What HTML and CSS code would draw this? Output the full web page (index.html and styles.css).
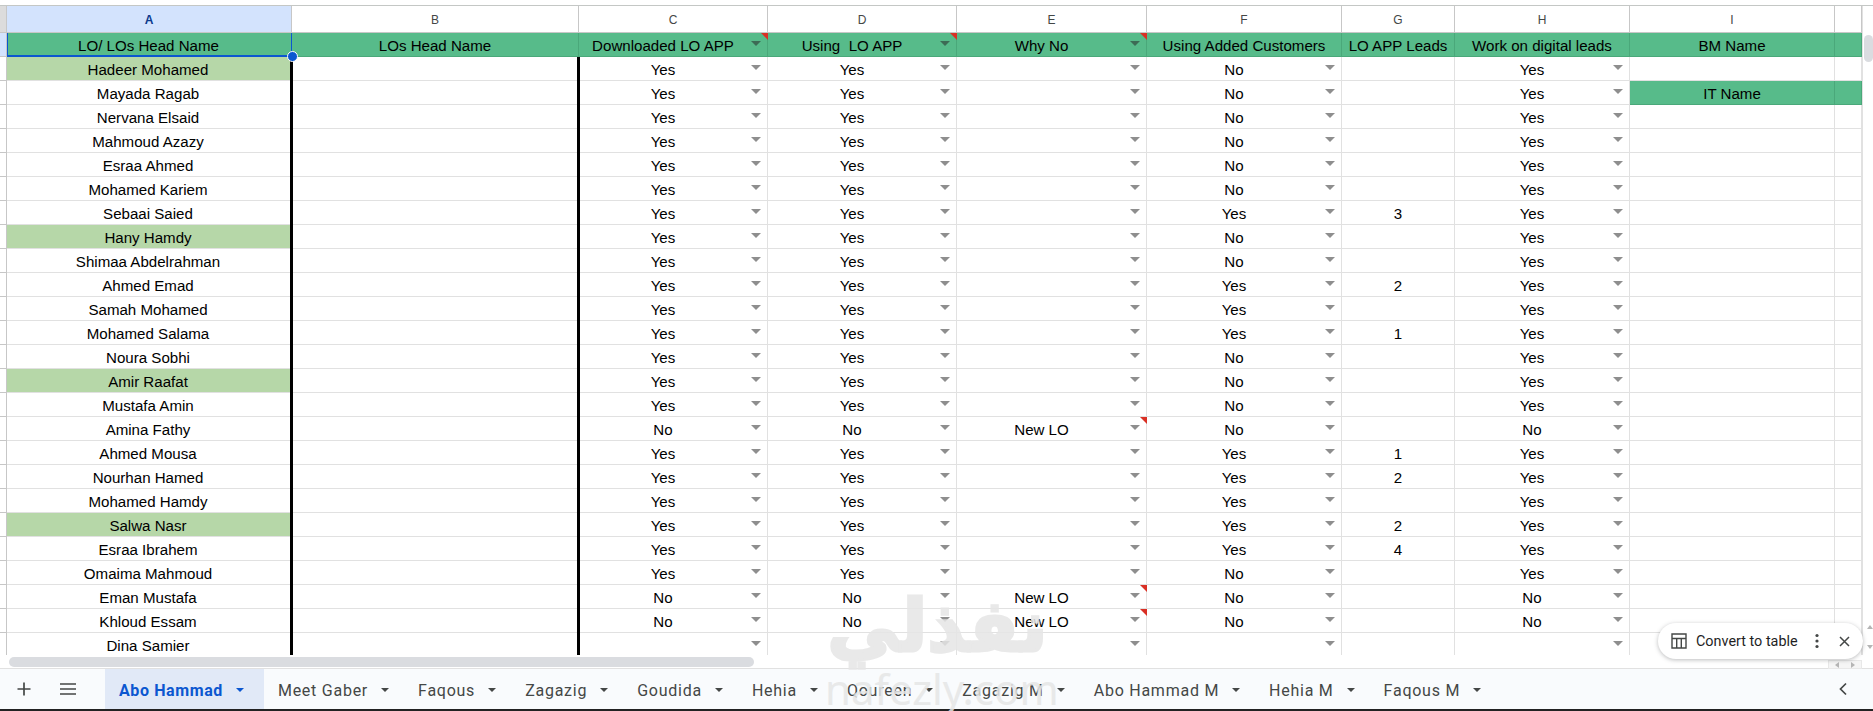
FILE: index.html
```html
<!DOCTYPE html>
<html lang="en">
<head>
<meta charset="utf-8">
<title>Abo Hammad</title>
<link rel="stylesheet" href="styles.css">
</head>
<body>
<div class="app">
  <div class="topgap"></div>
  <div class="main">
    <div class="sheet">
      <div class="row colhead"><div class="gut gut-sel"></div><div class="c a sel">A</div><div class="c b">B</div><div class="c cc">C</div><div class="c d">D</div><div class="c e">E</div><div class="c f">F</div><div class="c g">G</div><div class="c h">H</div><div class="c i">I</div><div class="c j"></div></div>
      <div class="row head"><div class="gut gut-sel"></div><div class="c a selcell">LO/ LOs Head Name</div><div class="c b">LOs Head Name</div><div class="c cc dd note">Downloaded LO APP</div><div class="c d dd note">Using &nbsp;LO APP</div><div class="c e dd note">Why No</div><div class="c f">Using Added Customers</div><div class="c g">LO APP Leads</div><div class="c h">Work on digital leads</div><div class="c i">BM Name</div><div class="c j"></div></div>
      <div class="row"><div class="gut"></div><div class="c a lead tb">Hadeer Mohamed</div><div class="c b tb"></div><div class="c cc dd">Yes</div><div class="c d dd">Yes</div><div class="c e dd"></div><div class="c f dd">No</div><div class="c g"></div><div class="c h dd">Yes</div><div class="c i"></div><div class="c j"></div></div>
      <div class="row"><div class="gut"></div><div class="c a tb">Mayada Ragab</div><div class="c b tb"></div><div class="c cc dd">Yes</div><div class="c d dd">Yes</div><div class="c e dd"></div><div class="c f dd">No</div><div class="c g"></div><div class="c h dd">Yes</div><div class="c i it">IT Name</div><div class="c j it"></div></div>
      <div class="row"><div class="gut"></div><div class="c a tb">Nervana Elsaid</div><div class="c b tb"></div><div class="c cc dd">Yes</div><div class="c d dd">Yes</div><div class="c e dd"></div><div class="c f dd">No</div><div class="c g"></div><div class="c h dd">Yes</div><div class="c i"></div><div class="c j"></div></div>
      <div class="row"><div class="gut"></div><div class="c a tb">Mahmoud Azazy</div><div class="c b tb"></div><div class="c cc dd">Yes</div><div class="c d dd">Yes</div><div class="c e dd"></div><div class="c f dd">No</div><div class="c g"></div><div class="c h dd">Yes</div><div class="c i"></div><div class="c j"></div></div>
      <div class="row"><div class="gut"></div><div class="c a tb">Esraa Ahmed</div><div class="c b tb"></div><div class="c cc dd">Yes</div><div class="c d dd">Yes</div><div class="c e dd"></div><div class="c f dd">No</div><div class="c g"></div><div class="c h dd">Yes</div><div class="c i"></div><div class="c j"></div></div>
      <div class="row"><div class="gut"></div><div class="c a tb">Mohamed Kariem</div><div class="c b tb"></div><div class="c cc dd">Yes</div><div class="c d dd">Yes</div><div class="c e dd"></div><div class="c f dd">No</div><div class="c g"></div><div class="c h dd">Yes</div><div class="c i"></div><div class="c j"></div></div>
      <div class="row"><div class="gut"></div><div class="c a tb">Sebaai Saied</div><div class="c b tb"></div><div class="c cc dd">Yes</div><div class="c d dd">Yes</div><div class="c e dd"></div><div class="c f dd">Yes</div><div class="c g">3</div><div class="c h dd">Yes</div><div class="c i"></div><div class="c j"></div></div>
      <div class="row"><div class="gut"></div><div class="c a lead tb">Hany Hamdy</div><div class="c b tb"></div><div class="c cc dd">Yes</div><div class="c d dd">Yes</div><div class="c e dd"></div><div class="c f dd">No</div><div class="c g"></div><div class="c h dd">Yes</div><div class="c i"></div><div class="c j"></div></div>
      <div class="row"><div class="gut"></div><div class="c a tb">Shimaa Abdelrahman</div><div class="c b tb"></div><div class="c cc dd">Yes</div><div class="c d dd">Yes</div><div class="c e dd"></div><div class="c f dd">No</div><div class="c g"></div><div class="c h dd">Yes</div><div class="c i"></div><div class="c j"></div></div>
      <div class="row"><div class="gut"></div><div class="c a tb">Ahmed Emad</div><div class="c b tb"></div><div class="c cc dd">Yes</div><div class="c d dd">Yes</div><div class="c e dd"></div><div class="c f dd">Yes</div><div class="c g">2</div><div class="c h dd">Yes</div><div class="c i"></div><div class="c j"></div></div>
      <div class="row"><div class="gut"></div><div class="c a tb">Samah Mohamed</div><div class="c b tb"></div><div class="c cc dd">Yes</div><div class="c d dd">Yes</div><div class="c e dd"></div><div class="c f dd">Yes</div><div class="c g"></div><div class="c h dd">Yes</div><div class="c i"></div><div class="c j"></div></div>
      <div class="row"><div class="gut"></div><div class="c a tb">Mohamed Salama</div><div class="c b tb"></div><div class="c cc dd">Yes</div><div class="c d dd">Yes</div><div class="c e dd"></div><div class="c f dd">Yes</div><div class="c g">1</div><div class="c h dd">Yes</div><div class="c i"></div><div class="c j"></div></div>
      <div class="row"><div class="gut"></div><div class="c a tb">Noura Sobhi</div><div class="c b tb"></div><div class="c cc dd">Yes</div><div class="c d dd">Yes</div><div class="c e dd"></div><div class="c f dd">No</div><div class="c g"></div><div class="c h dd">Yes</div><div class="c i"></div><div class="c j"></div></div>
      <div class="row"><div class="gut"></div><div class="c a lead tb">Amir Raafat</div><div class="c b tb"></div><div class="c cc dd">Yes</div><div class="c d dd">Yes</div><div class="c e dd"></div><div class="c f dd">No</div><div class="c g"></div><div class="c h dd">Yes</div><div class="c i"></div><div class="c j"></div></div>
      <div class="row"><div class="gut"></div><div class="c a tb">Mustafa Amin</div><div class="c b tb"></div><div class="c cc dd">Yes</div><div class="c d dd">Yes</div><div class="c e dd"></div><div class="c f dd">No</div><div class="c g"></div><div class="c h dd">Yes</div><div class="c i"></div><div class="c j"></div></div>
      <div class="row"><div class="gut"></div><div class="c a tb">Amina Fathy</div><div class="c b tb"></div><div class="c cc dd">No</div><div class="c d dd">No</div><div class="c e dd note">New LO</div><div class="c f dd">No</div><div class="c g"></div><div class="c h dd">No</div><div class="c i"></div><div class="c j"></div></div>
      <div class="row"><div class="gut"></div><div class="c a tb">Ahmed Mousa</div><div class="c b tb"></div><div class="c cc dd">Yes</div><div class="c d dd">Yes</div><div class="c e dd"></div><div class="c f dd">Yes</div><div class="c g">1</div><div class="c h dd">Yes</div><div class="c i"></div><div class="c j"></div></div>
      <div class="row"><div class="gut"></div><div class="c a tb">Nourhan Hamed</div><div class="c b tb"></div><div class="c cc dd">Yes</div><div class="c d dd">Yes</div><div class="c e dd"></div><div class="c f dd">Yes</div><div class="c g">2</div><div class="c h dd">Yes</div><div class="c i"></div><div class="c j"></div></div>
      <div class="row"><div class="gut"></div><div class="c a tb">Mohamed Hamdy</div><div class="c b tb"></div><div class="c cc dd">Yes</div><div class="c d dd">Yes</div><div class="c e dd"></div><div class="c f dd">Yes</div><div class="c g"></div><div class="c h dd">Yes</div><div class="c i"></div><div class="c j"></div></div>
      <div class="row"><div class="gut"></div><div class="c a lead tb">Salwa Nasr</div><div class="c b tb"></div><div class="c cc dd">Yes</div><div class="c d dd">Yes</div><div class="c e dd"></div><div class="c f dd">Yes</div><div class="c g">2</div><div class="c h dd">Yes</div><div class="c i"></div><div class="c j"></div></div>
      <div class="row"><div class="gut"></div><div class="c a tb">Esraa Ibrahem</div><div class="c b tb"></div><div class="c cc dd">Yes</div><div class="c d dd">Yes</div><div class="c e dd"></div><div class="c f dd">Yes</div><div class="c g">4</div><div class="c h dd">Yes</div><div class="c i"></div><div class="c j"></div></div>
      <div class="row"><div class="gut"></div><div class="c a tb">Omaima Mahmoud</div><div class="c b tb"></div><div class="c cc dd">Yes</div><div class="c d dd">Yes</div><div class="c e dd"></div><div class="c f dd">No</div><div class="c g"></div><div class="c h dd">Yes</div><div class="c i"></div><div class="c j"></div></div>
      <div class="row"><div class="gut"></div><div class="c a tb">Eman Mustafa</div><div class="c b tb"></div><div class="c cc dd">No</div><div class="c d dd">No</div><div class="c e dd note">New LO</div><div class="c f dd">No</div><div class="c g"></div><div class="c h dd">No</div><div class="c i"></div><div class="c j"></div></div>
      <div class="row"><div class="gut"></div><div class="c a tb">Khloud Essam</div><div class="c b tb"></div><div class="c cc dd">No</div><div class="c d dd">No</div><div class="c e dd note">New LO</div><div class="c f dd">No</div><div class="c g"></div><div class="c h dd">No</div><div class="c i"></div><div class="c j"></div></div>
      <div class="row last"><div class="gut"></div><div class="c a tb">Dina Samier</div><div class="c b tb"></div><div class="c cc dd"></div><div class="c d dd"></div><div class="c e dd"></div><div class="c f dd"></div><div class="c g"></div><div class="c h dd"></div><div class="c i"></div><div class="c j"></div></div>
      <span class="handle"></span>
    </div>
    <div class="vscroll"><div class="vthumb"></div><span class="vup"></span><span class="vdown"></span></div>
  </div>
  <div class="hscroll"><div class="hthumb"></div><div class="harrows"><span class="hl"></span><span class="hr"></span></div></div>
  <div class="tabs">
    <button class="tool" aria-label="Add sheet"><svg width="16" height="16" viewBox="0 0 16 16"><path d="M8 1.5v13M1.5 8h13" stroke="#444746" stroke-width="1.7" fill="none"/></svg></button>
    <button class="tool" aria-label="All sheets"><svg width="18" height="14" viewBox="0 0 18 14"><path d="M1 2h16M1 7h16M1 12h16" stroke="#444746" stroke-width="1.6" fill="none"/></svg></button>
    <div class="tab active">Abo Hammad<i></i></div>
    <div class="tab">Meet Gaber<i></i></div>
    <div class="tab">Faqous<i></i></div>
    <div class="tab">Zagazig<i></i></div>
    <div class="tab">Goudida<i></i></div>
    <div class="tab">Hehia<i></i></div>
    <div class="tab">Qoureen<i></i></div>
    <div class="tab">Zagazig M<i></i></div>
    <div class="tab">Abo Hammad M<i></i></div>
    <div class="tab">Hehia M<i></i></div>
    <div class="tab">Faqous M<i></i></div>
    <div class="tabs-end"><svg width="10" height="14" viewBox="0 0 10 14"><path d="M8 1.5L2.5 7 8 12.5" stroke="#444746" stroke-width="1.7" fill="none"/></svg></div>
  </div>
  <div class="convert">
    <svg width="16" height="16" viewBox="0 0 16 16"><path d="M1 1h14v14H1zM1 5.5h14M5.7 5.5V15M10.3 5.5V15" stroke="#444746" stroke-width="1.4" fill="none"/></svg>
    <span class="convert-label">Convert to table</span>
    <svg class="more" width="4" height="16" viewBox="0 0 4 16"><circle cx="2" cy="2.5" r="1.6" fill="#444746"/><circle cx="2" cy="8" r="1.6" fill="#444746"/><circle cx="2" cy="13.5" r="1.6" fill="#444746"/></svg>
    <svg class="close" width="11" height="11" viewBox="0 0 11 11"><path d="M1 1l9 9M10 1l-9 9" stroke="#444746" stroke-width="1.5" fill="none"/></svg>
  </div>
  <div class="wm" aria-hidden="true"><div class="wm-ar">نفذلي</div><div class="wm-en">nafezly.com</div></div>
</div>
</body>
</html>
```
FILE: styles.css
```css
* { box-sizing: border-box; }
html, body { margin: 0; padding: 0; height: 100%; overflow: hidden; background: #fff; }
.app { position: relative; width: 1873px; height: 711px; display: flex; flex-direction: column; font-family: "Liberation Sans", Arial, sans-serif; color: #000; }
.topgap { height: 6px; flex: none; background: #fff; border-bottom: 1px solid #c4c7c5; }
.main { display: flex; height: 649px; flex: none; overflow: hidden; }
.sheet { position: relative; width: 1862px; flex: none; }
.row { display: flex; height: 24px; font-size: 15.1px; line-height: 26px; }
.gut { width: 7px; flex: none; background: #fff; border-right: 1px solid #c7c7c7; border-bottom: 1px solid #c7c7c7; }
.gut-sel { background: #e6e6e6; }
.colhead .gut-sel { background: #dcdcdc; }
.head .gut-sel { background: #d3e3fd; }
.c { position: relative; flex: none; text-align: center; white-space: nowrap; overflow: visible; border-right: 1px solid #e1e1e1; border-bottom: 1px solid #e1e1e1; }
.a { width: 285px; padding-right: 2px; }
.b { width: 287px; }
.cc { width: 189px; }
.d { width: 189px; }
.e { width: 190px; }
.f { width: 195px; }
.g { width: 113px; }
.h { width: 175px; }
.i { width: 205px; }
.j { width: 27px; }
.dd { padding-right: 20px; }
.dd::after { content: ""; position: absolute; right: 6px; top: 8px; border-left: 5px solid transparent; border-right: 5px solid transparent; border-top: 5px solid #8e8e8e; }
.note::before { content: ""; position: absolute; right: -1px; top: 0; border-left: 7px solid transparent; border-top: 7px solid #d93025; z-index: 2; }
.colhead { height: 27px; font-size: 12px; line-height: 29px; color: #444746; }
.colhead .c { border-right-color: #c7c7c7; border-bottom-color: #c7c7c7; }
.colhead .sel { background: #d3e3fd; color: #0b3a8c; font-weight: bold; padding-right: 0; }
.head .c { background: #57bb8a; border-right-color: #4aa87a; border-bottom-color: #4aa87a; }
.head .c.dd::after { border-top-color: #3d6b55; }
.head .c.note::before { border-top-color: #d93025; }
.selcell.c { border-style: solid; border-color: #0b57d0; border-width: 0 1px 2px 1px; }
.it.c { background: #57bb8a; border-right-color: #4aa87a; border-bottom-color: #4aa87a; }
.lead { background: #b6d7a8; }
.tb::after { content: ""; position: absolute; right: -2px; top: 0; bottom: -1px; width: 3px; background: #000; z-index: 2; }
.handle { position: absolute; left: 287px; top: 45px; width: 11px; height: 11px; border-radius: 50%; background: #0b57d0; border: 1px solid #fff; z-index: 4; }
.vscroll { position: relative; flex: 1; background: #fff; border-left: 1px solid #e1e1e1; padding: 29px 0 0 1px; }
.vthumb { width: 9px; height: 27px; border-radius: 5px; background: #dadce0; }
.vup, .vdown { position: absolute; left: 4px; border-left: 3px solid transparent; border-right: 3px solid transparent; }
.vup { top: 619px; border-bottom: 4px solid #b5b5b5; }
.vdown { top: 639px; border-top: 4px solid #b5b5b5; }
.hscroll { position: relative; height: 14px; flex: none; padding: 2px 0 0 9px; background: #fff; border-bottom: 1px solid #e1e1e1; }
.hthumb { width: 745px; height: 10px; border-radius: 5px; background: #dadce0; }
.harrows { position: absolute; right: 11px; top: 5px; width: 34px; height: 9px; background: #f5f5f5; display: flex; justify-content: space-around; align-items: center; border: 1px solid #e8e8e8; }
.hl { border-top: 3px solid transparent; border-bottom: 3px solid transparent; border-right: 4px solid #b5b5b5; }
.hr { border-top: 3px solid transparent; border-bottom: 3px solid transparent; border-left: 4px solid #b5b5b5; }
.tabs { flex: 1; display: flex; align-items: stretch; background: #f9fbfd; border-bottom: 2px solid #222; font-family: Roboto, "Liberation Sans", sans-serif; font-size: 16px; letter-spacing: .75px; color: #444746; padding-left: 16px; }
.tool { width: 16px; margin-right: 27px; padding: 0; border: 0; background: none; display: flex; align-items: center; justify-content: center; }
.tool + .tool { width: 18px; margin-right: 28px; }
.tab { display: flex; align-items: center; padding: 2px 15px 0 14px; font-weight: 400; white-space: nowrap; }
.tab i { display: block; margin-left: 13px; border-left: 4.5px solid transparent; border-right: 4.5px solid transparent; border-top: 4.5px solid #444746; }
.tab.active { background: #e1e9f7; color: #0b57d0; padding: 2px 20px 0 14px; font-weight: 700; letter-spacing: .6px; }
.tab.active i { border-top-color: #0b57d0; }
.tabs-end { margin-left: auto; display: flex; align-items: center; padding-right: 25px; }
.convert { position: absolute; left: 1658px; top: 623px; width: 205px; height: 36px; border-radius: 18px; background: #fff; box-shadow: 0 1px 4px rgba(60,64,67,.35); display: flex; align-items: center; padding-left: 13px; font-family: Roboto, "Liberation Sans", sans-serif; font-size: 14.4px; color: #1f1f1f; z-index: 6; }
.convert-label { margin-left: 9px; }
.more { margin-left: 17px; }
.close { margin-left: 20px; }
.wm { position: absolute; left: 825px; top: 580px; width: 225px; text-align: center; color: #e6e6e6; opacity: .85; pointer-events: none; z-index: 5; }
.wm-ar { font-family: "DejaVu Sans", sans-serif; font-weight: bold; font-size: 72px; line-height: 92px; -webkit-text-stroke: 3px #e6e6e6; }
.wm-en { font-family: "Noto Sans", sans-serif; font-size: 42px; line-height: 34px; }
```
